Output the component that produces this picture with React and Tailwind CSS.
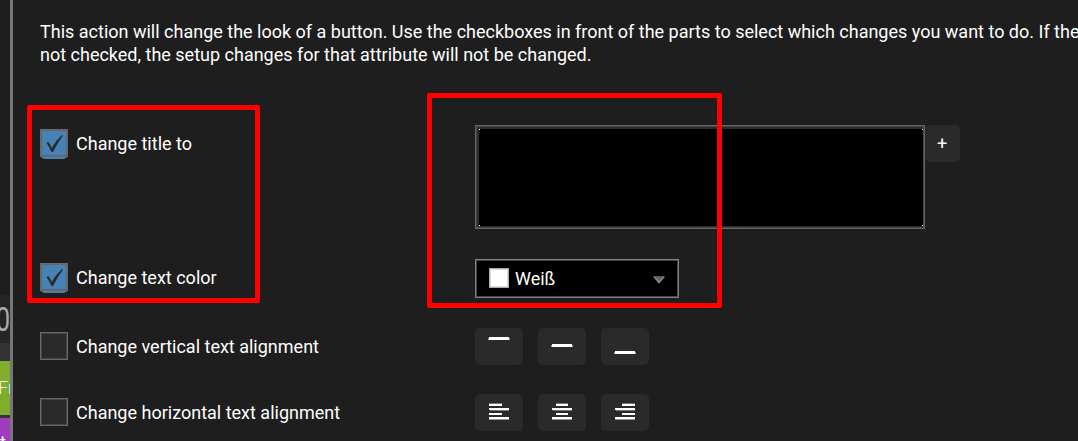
const Check = ({ on }) => (
  <span
    className={
      on
        ? "mt-1 block h-[30px] w-7 shrink-0 rounded-b-[5px] bg-[#4682b4]"
        : "mt-1 block h-7 w-7 shrink-0 bg-[#2a2a2a]"
    }
  >
    <span
      className={
        on
          ? "block h-7 w-7 border border-[#6a6a6a] shadow-[inset_0_0_0_1px_#5f6870]"
          : "block h-7 w-7 border border-[#686868] shadow-[inset_0_0_0_1px_#444]"
      }
    >
      {on && (
        <svg width="26" height="26" viewBox="0 0 26 26" className="block">
          <path
            d="M5.6 12.9 Q7.3 11.7 8.3 13.2 Q9.6 15.3 10.8 17.9 Q15.5 9.5 21.3 5 L22 5.4 Q17.2 11.8 12.4 21.2 Q11.2 23.2 10 21.2 Q8.4 17 5.6 12.9Z"
            fill="#2a2a2a"
          />
        </svg>
      )}
    </span>
  </span>
);

const Row = ({ on, label, className, children }) => (
  <div className={"grid grid-cols-[435px_1fr] items-start " + className}>
    <div className="flex items-start gap-2">
      <Check on={on} />
      <span className="mt-[5px] text-[18px] leading-7 whitespace-nowrap">{label}</span>
    </div>
    {children}
  </div>
);

const Button = ({ bars }) => (
  <button className="h-[37px] w-12 rounded-[5px] bg-[#2a2a2a]">
    <svg width="48" height="37" className="block" shapeRendering="crispEdges">
      {bars.map(([x, y, w, h, fill], i) => (
        <rect key={i} x={x} y={y} width={w} height={h} fill={fill || "#fff"} />
      ))}
    </svg>
  </button>
);

const line = (y) => [
  [13, y + 1, 22, 2, "#999"],
  [14, y, 20, 3],
];

const lines = (shortX, shortW) => [
  [shortX, 9, shortW, 1, "#777"],
  [shortX, 10, shortW, 2],
  [14, 14, 20, 2],
  [15, 16, 19, 1, "#777"],
  [shortX, 19, shortW, 2],
  [14, 23, 20, 2],
  [14, 25, 20, 1, "#999"],
];

export default function App() {
  return (
    <div className="relative flex h-[441px] w-[1078px] overflow-hidden bg-[#1e1e1e] font-['Roboto',sans-serif] text-white">
      <aside className="flex w-[10px] shrink-0 flex-col overflow-hidden bg-[#333]">
        <div className="h-[295px] shrink-0 bg-[#1e1e1e]" />
        <div className="flex h-12 shrink-0 justify-end bg-[#252525] text-[34px] leading-[48px] text-[#aaa]">
          <span className="origin-right scale-x-75">0</span>
        </div>
        <div className="mt-[18px] h-[54px] shrink-0 bg-[#7fae2e] text-[18px] leading-[54px] font-light whitespace-nowrap">
          <span className="-ml-[2px]">Fr</span>
        </div>
        <div className="mt-[3px] h-[60px] shrink-0 bg-[#a03bbd] text-[18px] leading-[50px] whitespace-nowrap">
          t
        </div>
      </aside>
      <div className="w-[3px] shrink-0 bg-[#777]" />
      <main className="min-w-0 flex-1 pt-5 pl-[27px]">
        <p className="text-[18px] leading-[23px] whitespace-nowrap">
          This action will change the look of a button. Use the checkboxes in front of the parts to select which changes you want to do. If the
          <br />
          not checked, the setup changes for that attribute will not be changed.
        </p>

        <Row on label="Change title to" className="mt-[59px] h-[134px]">
          <div className="flex items-start">
            <div className="h-[104px] w-[450px] border border-[#666] bg-[#2c2c2c]">
              <div className="h-[102px] w-[448px] border border-[#444] pt-[2px] pl-[2px]">
                <div className="flex h-[97px] w-[444px] flex-col justify-between bg-black">
                  <div className="flex justify-between">
                    <i className="h-px w-px bg-white" />
                    <i className="h-px w-px bg-white" />
                  </div>
                  <div className="flex justify-between">
                    <i className="h-px w-px bg-white" />
                    <i className="h-px w-px bg-white" />
                  </div>
                </div>
              </div>
            </div>
            <button className="h-[37px] w-[35px] rounded-[5px] bg-[#2a2a2a] pr-px pb-px text-[18px]">+</button>
          </div>
        </Row>

        <Row on label="Change text color" className="h-[69px]">
          <div className="flex h-[39px] w-[204px] items-center border border-[#808080] bg-black pr-[13px] pl-[13px] shadow-[inset_0_0_0_1px_#444]">
            <span className="mb-[2px] h-5 w-5 border border-[#aaa] bg-white shadow-[inset_0_0_0_1px_#ddd]" />
            <span className="ml-[6px] flex-1 text-[18px] leading-6">Weiß</span>
            <svg width="12" height="8" viewBox="0 0 12 8" className="mt-[2px]">
              <path d="M0 .5H12L6 7.5Z" fill="#aaa" />
              <path d="M1.5 1H10.5L6 6Z" fill="#666" />
            </svg>
          </div>
        </Row>

        <Row label="Change vertical text alignment" className="h-[66px]">
          <div className="flex gap-[15px]">
            <Button bars={line(9)} />
            <Button bars={line(16)} />
            <Button bars={line(23)} />
          </div>
        </Row>

        <Row label="Change horizontal text alignment" className="h-[47px]">
          <div className="flex gap-[15px]">
            <Button bars={lines(14, 13)} />
            <Button bars={lines(18, 12)} />
            <Button bars={lines(21, 13)} />
          </div>
        </Row>
      </main>

      <div className="pointer-events-none absolute top-[105px] left-[27px] h-[198px] w-[233px] rounded-[2px] border-5 border-[#f00]" />
      <div className="pointer-events-none absolute top-[93px] left-[427px] h-[215px] w-[295px] rounded-[2px] border-5 border-[#f00]" />
    </div>
  );
}
